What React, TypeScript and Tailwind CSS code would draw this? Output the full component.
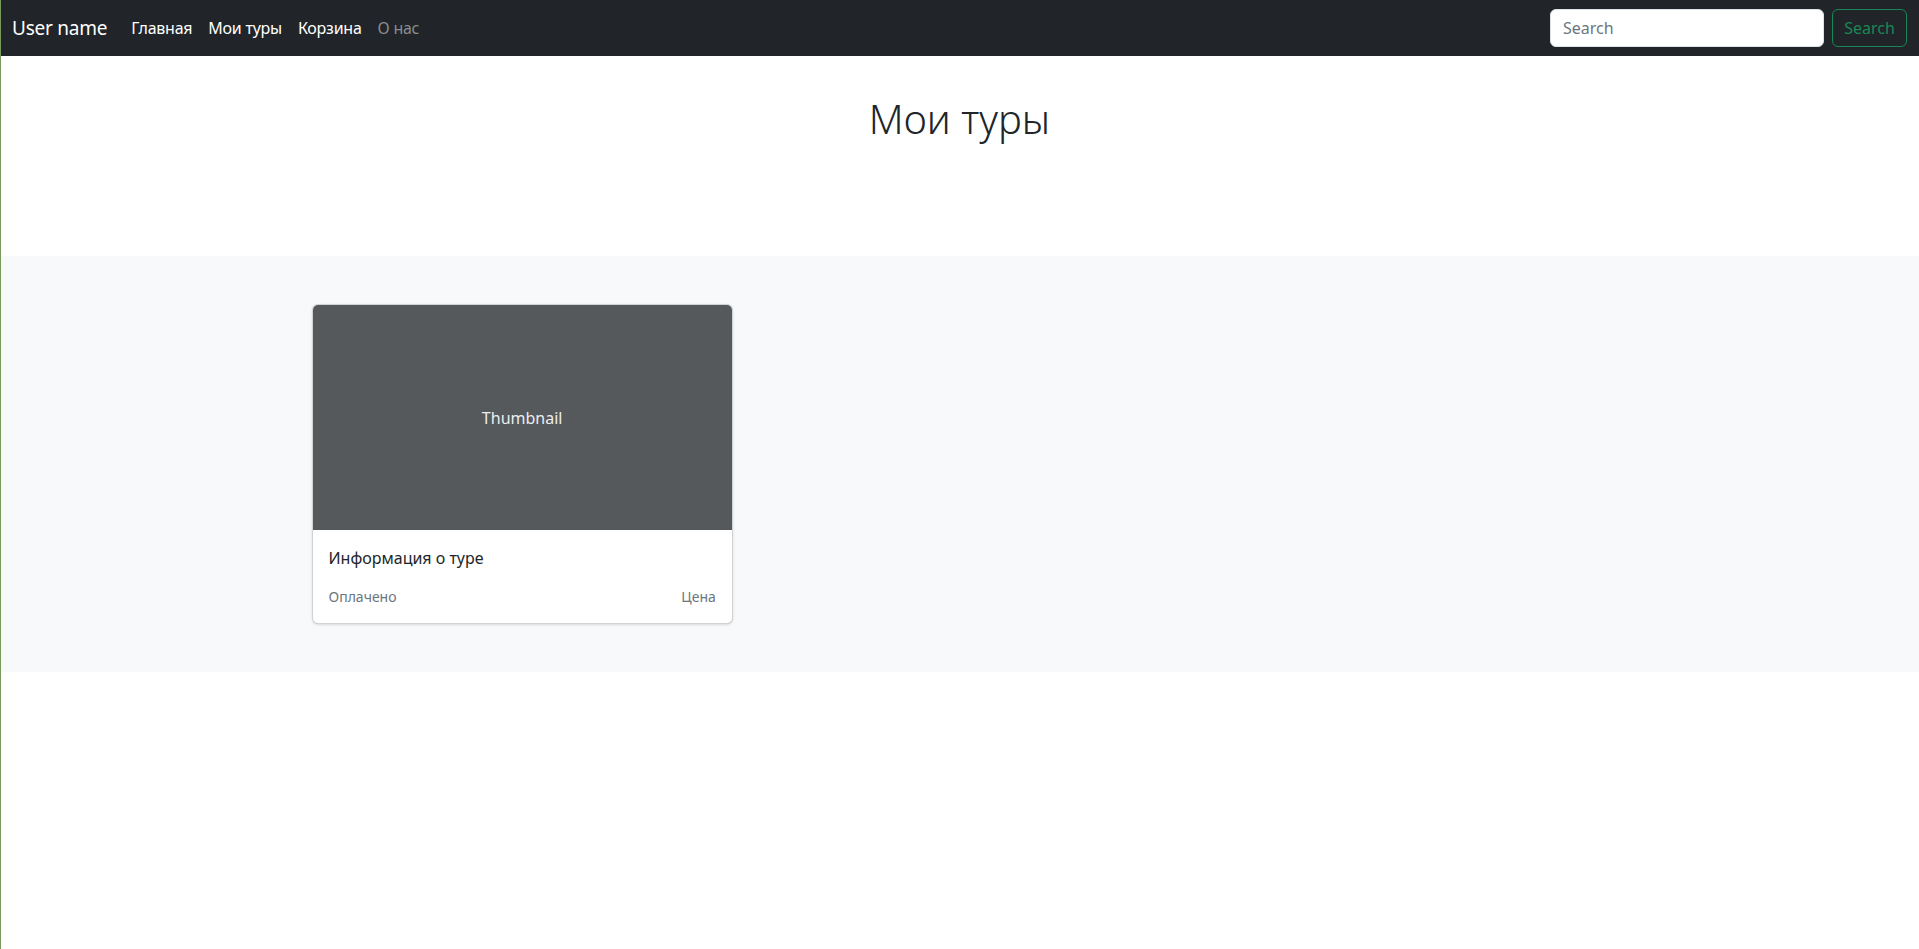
import React from "react";

const font = { fontFamily: '"Noto Sans", "Open Sans", sans-serif' };

export default function App() {
  return (
    <div className="relative min-h-[949px] bg-white text-[#212529]" style={font}>
      <div className="absolute left-0 top-0 bottom-0 w-px bg-[#7b9b5e] z-10" />
      <nav className="h-14 bg-[#212529] flex items-center px-3">
        <a className="text-white text-[19px] leading-[30px] tracking-[-0.25px] mr-4">User name</a>
        <ul className="flex items-center text-[16px] tracking-[-0.25px]">
          <li className="px-2 text-white">Главная</li>
          <li className="px-2 text-white">Мои туры</li>
          <li className="px-2 text-white">Корзина</li>
          <li className="px-2 text-[#8a8c8f]">О нас</li>
        </ul>
        <div className="ml-auto flex items-center gap-2">
          <input
            className="w-[274px] h-[38px] bg-white rounded-md border border-[#dee2e6] px-3 text-[16px] placeholder:text-[#6c757d] outline-none"
            placeholder="Search"
          />
          <button className="h-[38px] w-[75px] rounded-md border border-[#198754] text-[#198754] text-[16px]">
            Search
          </button>
        </div>
      </nav>

      <section className="h-[200px] pt-[39px] text-center">
        <h1 className="text-[40px] leading-[48px] font-light">Мои туры</h1>
      </section>

      <div className="bg-[#f8f9fa] py-12">
        <div className="w-[1320px] mx-auto px-3">
          <div className="grid grid-cols-3 gap-4">
            <div className="bg-white border border-black/[.175] rounded-md shadow-sm overflow-hidden">
              <div className="h-[225px] bg-[#55595c] flex items-center justify-center text-[#eceeef] text-[16px]">
                Thumbnail
              </div>
              <div className="p-4">
                <p className="text-[16px] leading-6 mb-4">Информация о туре</p>
                <div className="flex justify-between items-center">
                  <small className="text-[14px] leading-[21px] text-[#6c757d]">Оплачено</small>
                  <small className="text-[14px] leading-[21px] text-[#6c757d]">Цена</small>
                </div>
              </div>
            </div>
          </div>
        </div>
      </div>
    </div>
  );
}
